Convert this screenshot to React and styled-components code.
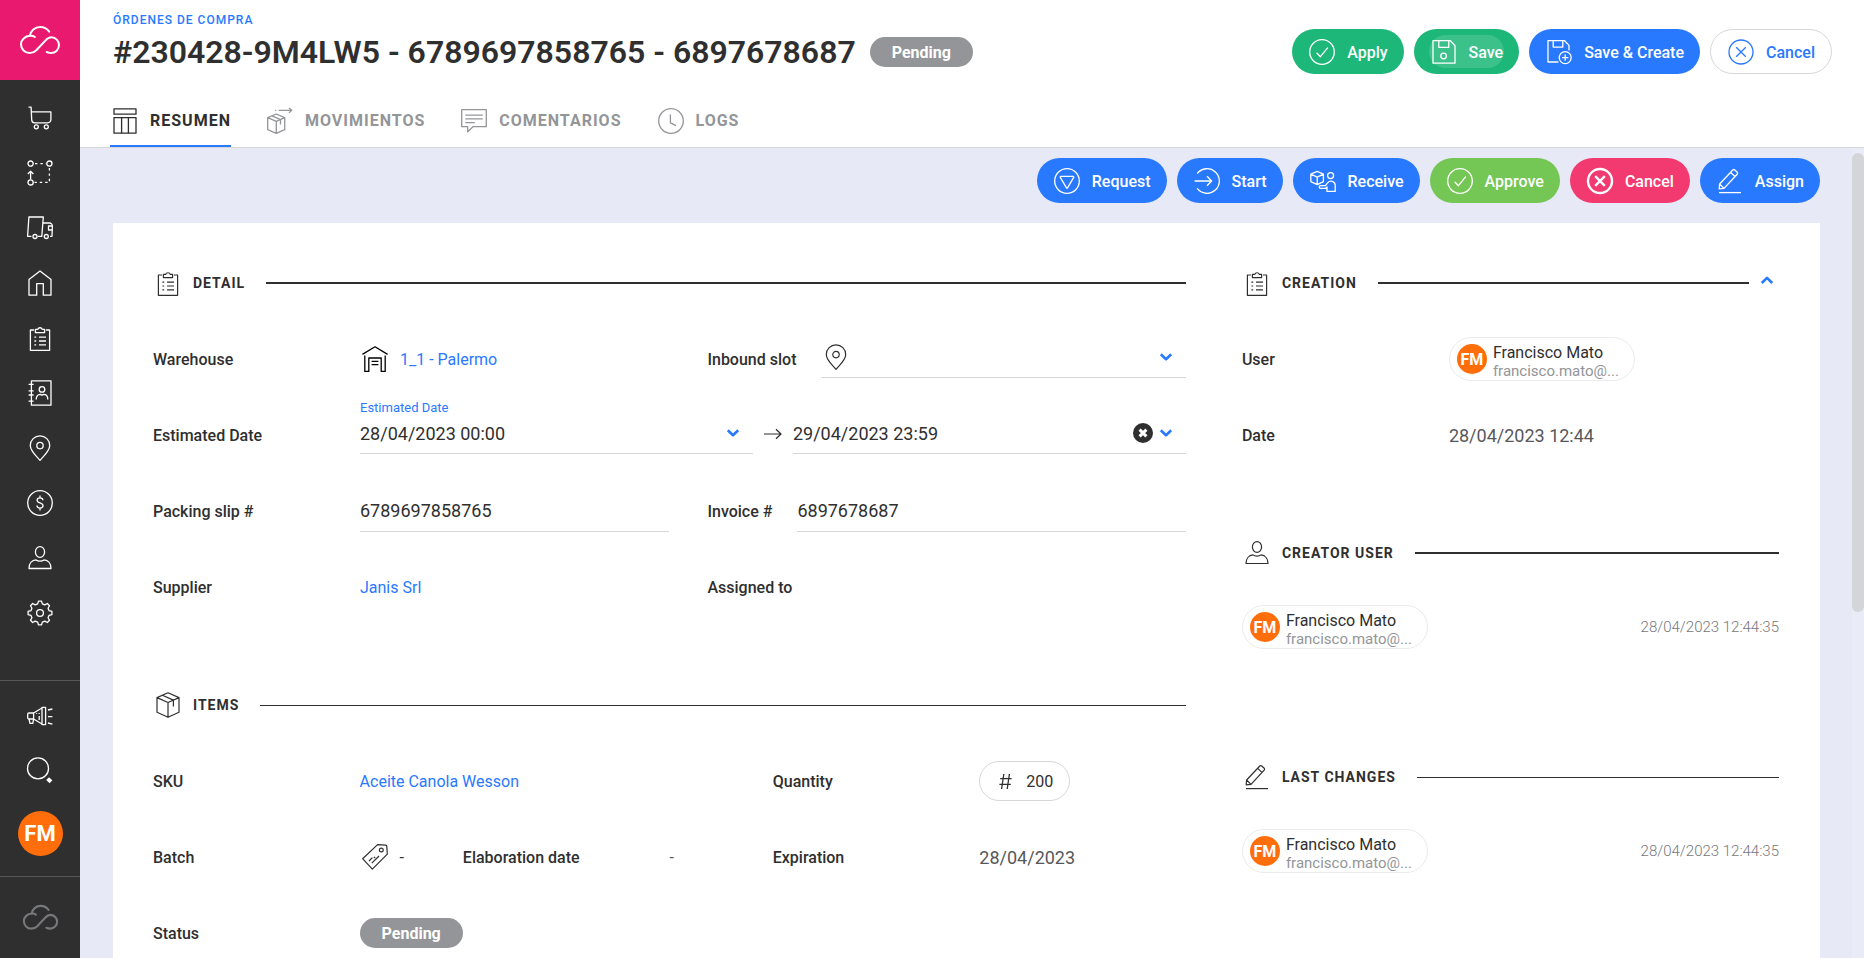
import { useState } from "react";
import styled, { createGlobalStyle, css } from "styled-components";

const colors = {
  black: "#2f2f2f",
  darkGrey: "#58585a",
  midGrey: "#77787b",
  grey: "#939598",
  lightGrey: "#d5d7db",
  blue: "#2979ff",
  green: "#1db779",
  lightGreen: "#74c655",
  red: "#f33a70",
  pink: "#e8196e",
  orange: "#ff6e0b",
  background: "#e7eaf6",
};

const GlobalStyle = createGlobalStyle`
  * {
    box-sizing: border-box;
  }
  body {
    margin: 0;
    font-family: Roboto, "Liberation Sans", sans-serif;
    font-size: 16px;
    color: ${colors.black};
  }
  button, input, select {
    font: inherit;
    color: inherit;
  }
`;

/** Icons */

const Svg = styled.svg`
  display: block;
  flex: none;
  overflow: visible;
  fill: none;
  stroke: currentColor;
  stroke-linejoin: round;
`;

const GEAR_PATH = (() => {
  const points = [];
  for (let i = 0; i < 8; i++) {
    const mid = (i * Math.PI) / 4;
    [[-0.25, 9.4], [-0.13, 12], [0.13, 12], [0.25, 9.4]].forEach(([offset, radius]) => {
      const x = 13 + radius * Math.sin(mid + offset);
      const y = 13 - radius * Math.cos(mid + offset);
      points.push(`${x.toFixed(2)} ${y.toFixed(2)}`);
    });
  }
  return `M${points.join("L")}Z`;
})();

const icons = {
  cart: (
    <>
      <path d="M1.5 2.2h2.6l.6 12.6a3 3 0 0 0 3 3h13a3.2 3.2 0 0 0 3.2-3.2V6.8H4.4" />
      <circle cx="9.3" cy="21.8" r="2" />
      <circle cx="19.3" cy="21.8" r="2" />
    </>
  ),
  route: (
    <>
      <circle cx="3.6" cy="3.6" r="2.6" />
      <circle cx="22.4" cy="3.6" r="2.6" />
      <circle cx="3.6" cy="22.4" r="2.6" />
      <path d="M8 3.6h11M22.4 8v14.4H7.5" strokeDasharray="2.4 3" />
      <path d="M3.6 19.6v-8M.8 14l2.8-2.8L6.4 14" />
    </>
  ),
  truck: (
    <>
      <path d="M4.4 21.3H.6L1.9 2h14.4l-1.5 19.3h-4M16 8h6.4a3 3 0 0 1 3 3l-.4 10.3h-2" />
      <path d="M25.3 11h-3.8v4h3.8" />
      <circle cx="8" cy="21.5" r="2" />
      <circle cx="19.3" cy="21.5" r="2" />
    </>
  ),
  home: <path d="M2 25.2V9.6L13 1l11 8.6v15.6h-7.7V13.6H9.7v11.6z" />,
  clipboard: (
    <>
      <path d="M7 5H3.4v20.3h19.2V5H19" />
      <path d="M8.4 7.6V4.4h2.4a2.3 2.3 0 0 1 4.4 0h2.4v3.2z" />
      <path d="M7.4 12.2h1.8M7.4 16h1.8M7.4 19.8h1.8M12 12.2h7M12 16h7M12 19.8h7" />
    </>
  ),
  contacts: (
    <>
      <path d="M4.4.8H24v24.4H4.4z" />
      <path d="M1.6 4.4h5M1.6 10.8h5M1.6 15h5M1.6 21.2h5" />
      <circle cx="15" cy="9.4" r="2.8" />
      <path d="M9.2 19.6c0-3 1.4-5.2 4-5.2 1 .7 2.6.7 3.6 0 2.6 0 4 2.2 4 5.2" />
    </>
  ),
  pin: (
    <>
      <path d="M13 25.4C9 20.5 3.3 16.2 3.3 10.5a9.7 9.7 0 0 1 19.4 0c0 5.7-5.7 10-9.7 14.9z" />
      <circle cx="13" cy="10.6" r="3.2" />
    </>
  ),
  dollar: (
    <>
      <circle cx="13" cy="13" r="12.3" />
      <path d="M15.9 10.2c0-1.5-1.2-2.4-2.9-2.4s-2.9.9-2.9 2.4c0 3.4 5.9 2 5.9 5.4 0 1.5-1.3 2.5-3 2.5s-3-1-3-2.5M13 5.4v2.4M13 18.1v2.5" />
    </>
  ),
  person: (
    <>
      <ellipse cx="13" cy="7" rx="4.6" ry="5.4" />
      <path d="M2 23.5c0-4.8 2.8-8.3 7-8.6 2 1.7 6 1.7 8 0 4.2.3 7 3.8 7 8.6z" />
    </>
  ),
  gear: (
    <>
      <path d={GEAR_PATH} />
      <circle cx="13" cy="13" r="3.4" />
    </>
  ),
  megaphone: (
    <>
      <path d="M6.6 10H2a1.3 1.3 0 0 0-1.3 1.3v3.4A1.3 1.3 0 0 0 2 16h4.6zM6.6 10L15 5M6.6 16l8.400 5" />
      <path d="M15 4.4h3.6v17.2H15zM2 16l1 4.400h2.800L6.600 16M12.200 10v1M12.200 13v4M9.600 10.200v.8" />
      <path d="M21 7l4.400-1M21 13.600h4.400M21 20l4.400 1.200" />
    </>
  ),
  search: (
    <>
      <circle cx="11" cy="11.4" r="10.5" />
      <path d="M20.6 21.6l3.4 3.2" strokeWidth="4" />
    </>
  ),
  table: (
    <>
      <path d="M2 .8h22v5.4H2zM2 9.6h22v15.6H2z" />
      <path d="M9.6 9.6v15.6M16.4 9.6v15.6" />
    </>
  ),
  boxArrow: (
    <>
      <path d="M9.3 6l8.4 3.7v12l-8.4 3.6-8.6-3.6v-12zM.7 9.7l8.6 3.7 8.4-3.7M9.3 13.4v11.9" />
      <path d="M5 7.9l8.5 3.7v5M8.1 2.3h1.2M11.6 2.3h13M22 0l2.7 2.3L22 4.9" />
    </>
  ),
  comment: (
    <>
      <path d="M.7 1.7h24.6v17H12l-5.3 5v-5h-6z" />
      <path d="M4.4 7.2h17.4M4.4 10.9h17.4M4.4 14.7h9.4" />
    </>
  ),
  clock: (
    <>
      <circle cx="13" cy="13" r="12.3" />
      <path d="M12.4 6.6v8.2l5.6 2.8" />
    </>
  ),
  check: (
    <>
      <circle cx="13" cy="13" r="12.3" />
      <path d="M7.6 13.7l3.8 4 7.4-9" />
    </>
  ),
  save: (
    <>
      <path d="M2 1.7h17.4L24 6.8v17.4H2zM7.8 1.7v6.6h10V1.7" />
      <circle cx="12.6" cy="17" r="2.8" />
    </>
  ),
  saveCreate: (
    <>
      <path d="M12.4 23H2V1.7h16.6L23 6.4v5M7.2 1.7v6.4h9.6V1.7" />
      <circle cx="19.2" cy="18.6" r="6" />
      <path d="M19.2 15.4v6.4M16 18.6h6.4" />
    </>
  ),
  cross: (
    <>
      <circle cx="13" cy="13" r="12" />
      <path d="M8.2 8.2l9.6 9.6M17.8 8.2l-9.6 9.6" />
    </>
  ),
  request: (
    <>
      <circle cx="13" cy="13" r="12.3" />
      <path d="M6.8 8.4h12.4a.6.6 0 0 1 .5.9l-6.200 10.600a.6.6 0 0 1-1 0L6.300 9.300a.6.6 0 0 1 .5-.9z" />
    </>
  ),
  start: (
    <>
      <path d="M3.2 5.6a12.3 12.3 0 1 1 0 14.8" />
      <path d="M.6 13h16.8M13 8.2l4.6 4.8-4.6 4.8" />
    </>
  ),
  receive: (
    <>
      <path d="M7.2 3.4l6.2 2.8v7.4l-6.2 3-6.4-3V6.2zM.8 6.2l6.4 3 6.2-3M7.2 9.2v7.4" />
      <circle cx="20.6" cy="7.6" r="3" />
      <path d="M17 23.4h8.2V17a4.2 4.2 0 0 0-7.4-2.4l-2.4 3h-4.8a1.4 1.4 0 0 0 0 2.8h4.8l1.6-1.4z" />
    </>
  ),
  pencil: (
    <>
      <path d="M2.2 20.8l.4-4.8L15.8 2a1.500 1.500 0 0 1 2 0l2.400 2.200a1.500 1.500 0 0 1 0 2L7 20.400zM13.600 4.400l4.400 4M2.600 16L7 20.400" />
      <path d="M2 24.6h22" />
    </>
  ),
  warehouse: (
    <>
      <path d="M.4 8.4L13 .8l12.6 7.6M2.8 9.4v16h4V12h12.4v13.4h4v-16" />
      <path d="M9.6 15.4h6.8M9.6 18.7h6.8" />
    </>
  ),
  box: (
    <>
      <path d="M13 .8l11 4.8v14.6l-11 5-11-5V5.600zM2 5.600l11 4.900 11-4.900M13 10.500v14.700" />
      <path d="M7.4 3.2l11 4.9v6.4" />
    </>
  ),
  tag: (
    <>
      <path d="M15.6.6l8 .6a1.3 1.3 0 0 1 1.2 1.2l.5 7.8-15 15L.6 14.7z" />
      <circle cx="19.3" cy="6" r="1.9" />
      <path d="M7 17l3.4-3.4M9.8 19.2l7.2-7.2M11.8 14.2l1.4-1.4" />
    </>
  ),
};

function Icon({ name, strokeWidth = 1.3 }) {
  return (
    <Svg viewBox="0 0 26 26" width="26" height="26" strokeWidth={strokeWidth} aria-hidden="true">
      {icons[name]}
    </Svg>
  );
}

function Logo({ width, strokeWidth = 2 }) {
  return (
    <Svg
      viewBox="0 0 40 28"
      width={width}
      strokeWidth={strokeWidth}
      strokeLinecap="round"
      aria-hidden="true"
    >
      <path d="M29.2 5.6C27 2.7 23.8 1 20.2 1 14.8 1 10.6 4.8 9.9 9.8" />
      <path d="M14.8 10.9C13.4 10 11.8 9.6 10 9.7 5 10 1 13.8 1 18.3 1 23.2 4.8 27 9.7 27c2.6 0 4.8-1 6.6-2.8l9-9.6c1.7-1.9 3.5-3.3 6-3.3 4.4 0 7.7 3.6 7.7 7.8 0 4.4-3.5 7.9-7.9 7.9-1.6 0-3-.4-4.4-1" />
    </Svg>
  );
}

function Chevron({ up }) {
  return (
    <Svg viewBox="0 0 12 8" width="12" height="8" strokeWidth="2.6" aria-hidden="true">
      <path d={up ? "M.8 7L6 1.8 11.2 7" : "M.8 1.2L6 6.2l5.2-5"} />
    </Svg>
  );
}

/** Page shell */

const Page = styled.div`
  display: flex;
  height: 100vh;
  overflow: hidden;
  background-color: ${colors.background};
`;

const Sidebar = styled.aside`
  width: 80px;
  flex: none;
  display: flex;
  flex-direction: column;
  background-color: ${colors.black};
  color: #fff;
`;

const LogoLink = styled.a`
  height: 80px;
  flex: none;
  display: flex;
  align-items: center;
  justify-content: center;
  color: #fff;
  background-color: ${colors.pink};
`;

const Nav = styled.nav`
  flex: 1;
  display: flex;
  flex-direction: column;
  align-items: center;
  gap: 29px;
  padding-top: 25px;
`;

const NavLink = styled.a`
  color: #fff;
`;

const SidebarTools = styled.div`
  display: flex;
  flex-direction: column;
  align-items: center;
  gap: 28px;
  padding: 22px 0 20px;
  border-top: 1px solid ${colors.darkGrey};
`;

const IconButton = styled.button`
  display: flex;
  align-items: center;
  padding: 0;
  border: 0;
  background: none;
  cursor: pointer;
  color: ${(props) => props.$color || "inherit"};
`;

const SidebarFooter = styled.div`
  height: 82px;
  display: flex;
  align-items: center;
  justify-content: center;
  border-top: 1px solid ${colors.darkGrey};
  color: ${colors.midGrey};
`;

const Avatar = styled.span`
  flex: none;
  width: ${(props) => props.$size}px;
  height: ${(props) => props.$size}px;
  border-radius: 50%;
  display: flex;
  align-items: center;
  justify-content: center;
  font-size: ${(props) => (props.$size > 40 ? 22 : 16)}px;
  font-weight: 700;
  color: #fff;
  background-color: ${colors.orange};
`;

const Main = styled.main`
  flex: 1;
  min-width: 0;
  display: flex;
  flex-direction: column;
`;

/** Header */

const Header = styled.header`
  flex: none;
  background-color: #fff;
  border-bottom: 1px solid ${colors.lightGrey};
`;

const HeaderTop = styled.div`
  display: flex;
  justify-content: space-between;
  align-items: flex-end;
  padding: 12px 32px 0 33px;
`;

const Breadcrumb = styled.a`
  display: block;
  font-size: 12px;
  line-height: 17px;
  font-weight: 500;
  letter-spacing: 1px;
  text-decoration: none;
  color: ${colors.blue};
`;

const TitleRow = styled.div`
  display: flex;
  align-items: center;
  gap: 14px;
  height: 45px;
`;

const Title = styled.h1`
  margin: 0;
  font-size: 32px;
  font-weight: 600;
`;

const Badge = styled.span`
  display: inline-block;
  padding: 2px 22px 0;
  border-radius: 15px;
  line-height: 28px;
  font-weight: 700;
  color: #fff;
  background-color: ${colors.grey};
`;

const Actions = styled.div`
  display: flex;
  gap: 10px;
`;

const ActionButton = styled.button`
  position: relative;
  display: flex;
  align-items: center;
  gap: 12px;
  height: 45px;
  padding: 1px 16px 0 17px;
  border: 0;
  border-radius: 23px;
  font-weight: 500;
  cursor: pointer;
  color: #fff;
  background-color: ${(props) => colors[props.$color] || colors.blue};

  ${(props) =>
    props.$outlined &&
    css`
      color: ${colors.blue};
      background-color: #fff;
      border: 1px solid ${colors.lightGrey};
    `}

  ${(props) =>
    props.$pressed &&
    css`
      &::after {
        content: "";
        position: absolute;
        inset: 6px 15px;
        border-radius: 17px;
        background-color: rgba(255, 255, 255, 0.14);
      }
    `}
`;

const Tabs = styled.nav`
  display: flex;
  gap: 34px;
  padding: 19px 30px 0;
`;

const Tab = styled.button`
  display: flex;
  align-items: center;
  gap: 12px;
  height: 54px;
  padding: 3px 0 0 2px;
  border: 0;
  border-bottom: 2px solid ${(props) => (props.$active ? colors.blue : "transparent")};
  background: none;
  font-weight: 700;
  letter-spacing: 1px;
  cursor: pointer;
  color: ${(props) => (props.$active ? colors.black : colors.grey)};
`;

/** Content */

const Body = styled.div`
  flex: 1;
  min-height: 0;
  display: flex;
`;

const Content = styled.div`
  flex: 1;
  min-width: 0;
  overflow-y: auto;
  scrollbar-width: none;
  padding: 10px 32px 0 33px;
`;

const ScrollTrack = styled.div`
  width: 12px;
  flex: none;
  padding-top: 5px;
  background-color: #e9ebf7;
`;

const ScrollThumb = styled.div`
  height: 57%;
  border-radius: 6px;
  background-color: #d4d5d8;
`;

const Toolbar = styled(Actions)`
  justify-content: flex-end;
  margin-bottom: 20px;
`;

const Card = styled.div`
  display: grid;
  grid-template-columns: 25fr 13fr;
  column-gap: 56px;
  min-height: 100%;
  padding: 45px 41px 45px 40px;
  background-color: #fff;
`;

const Section = styled.section`
  margin-bottom: 65px;
`;

const SectionHeader = styled.div`
  display: flex;
  align-items: center;
  height: 30px;
  padding-left: 2px;
  margin-bottom: 23px;
`;

const SectionTitle = styled.h2`
  margin: 0 21px 0 12px;
  font-size: 14px;
  font-weight: 700;
  letter-spacing: 1px;
`;

const Rule = styled.div`
  flex: 1;
  height: ${(props) => (props.$thin ? 1 : 2)}px;
  background-color: ${colors.black};
`;

const CollapseButton = styled(IconButton)`
  margin: 0 6px 6px 12px;
`;

const Row = styled.div`
  display: flex;
  align-items: center;
  height: 76px;
`;

const LeftHalf = styled.div`
  width: 50%;
  flex: none;
  display: flex;
  align-items: center;
  margin-right: 38px;
`;

const RightHalf = styled.div`
  flex: 1;
  min-width: 0;
  display: flex;
  align-items: center;
  gap: 25px;
`;

const ItemRow = styled.div`
  display: grid;
  grid-template-columns: repeat(10, 1fr);
  align-items: center;
  height: 76px;
`;

const Cell = styled.div`
  grid-column: span ${(props) => props.$span};
  display: flex;
  align-items: center;
  gap: 12px;
  color: ${(props) => (props.$muted ? colors.darkGrey : colors.black)};
  font-weight: ${(props) => (props.$label ? 500 : 400)};
`;

const Label = styled.label`
  flex: none;
  font-weight: 500;
  width: ${(props) => (props.$wide ? "207px" : "auto")};
`;

const Value = styled.span`
  font-size: 18px;
  color: ${colors.darkGrey};
`;

const ValueLink = styled.a`
  text-decoration: none;
  color: ${colors.blue};
`;

const IconValue = styled.div`
  display: flex;
  align-items: center;
  gap: 12px;
  padding-left: 2px;
  color: ${(props) => (props.$strong ? "#000" : colors.black)};
`;

const Field = styled.div`
  position: relative;
  flex: 1;
  min-width: 0;
  display: flex;
  align-items: center;
  gap: 7px;
  height: ${(props) => (props.$tall ? 42 : 38)}px;
  padding: ${(props) => (props.$tall ? "0" : "0 14px 3px 0")};
  border-bottom: 1px solid ${colors.lightGrey};
`;

const SlotField = styled(Field)`
  padding-left: 2px;
`;

const FloatingLabel = styled.label`
  position: absolute;
  top: -16px;
  left: 0;
  font-size: 13px;
  line-height: 16px;
  color: ${colors.blue};
`;

const Input = styled.input`
  flex: 1;
  min-width: 0;
  padding: 0;
  border: 0;
  outline: none;
  background: none;
  font-size: 18px;
`;

const SlotSelect = styled.select`
  flex: 1;
  min-width: 0;
  appearance: none;
  border: 0;
  outline: none;
  background: none;
`;

const ArrowSlot = styled.div`
  width: 40px;
  flex: none;
  display: flex;
  justify-content: center;
  padding-bottom: 3px;
`;

const QuantityPill = styled.span`
  display: flex;
  align-items: center;
  gap: 14px;
  height: 40px;
  padding: 0 16px 0 19px;
  border: 1px solid ${colors.lightGrey};
  border-radius: 20px;
`;

const Chip = styled.div`
  display: flex;
  align-items: center;
  gap: 6px;
  width: 186px;
  height: 44px;
  padding-left: 7px;
  border: 1px solid #ebebeb;
  border-radius: 22px;
`;

const ChipText = styled.div`
  padding-top: 4px;
  line-height: 19px;
`;

const ChipEmail = styled.div`
  font-size: 15px;
  line-height: 18px;
  color: ${colors.grey};
`;

const LogRow = styled.div`
  display: flex;
  align-items: center;
  justify-content: space-between;
  height: 72px;
  margin-bottom: 99px;
`;

const Timestamp = styled.time`
  font-size: 15px;
  font-weight: 300;
  color: ${colors.midGrey};
`;

const navItems = [
  ["cart", "Orders"],
  ["route", "Routes"],
  ["truck", "Delivery"],
  ["home", "Home"],
  ["clipboard", "Purchases"],
  ["contacts", "Contacts"],
  ["pin", "Locations"],
  ["dollar", "Pricing"],
  ["person", "Users"],
  ["gear", "Settings"],
];

const tabs = [
  ["table", "RESUMEN"],
  ["boxArrow", "MOVIMIENTOS"],
  ["comment", "COMENTARIOS"],
  ["clock", "LOGS"],
];

const orderActions = [
  { icon: "request", text: "Request" },
  { icon: "start", text: "Start" },
  { icon: "receive", text: "Receive" },
  { icon: "check", text: "Approve", color: "lightGreen" },
  { icon: "cross", text: "Cancel", color: "red", strokeWidth: 2.4 },
  { icon: "pencil", text: "Assign" },
];

function Action({ icon, text, color, strokeWidth, ...rest }) {
  return (
    <ActionButton type="button" $color={color} {...rest}>
      <Icon name={icon} strokeWidth={strokeWidth} />
      {text}
    </ActionButton>
  );
}

function Heading({ icon, title, thin, children }) {
  return (
    <SectionHeader>
      <Icon name={icon} strokeWidth={1.2} />
      <SectionTitle>{title}</SectionTitle>
      <Rule $thin={thin} />
      {children}
    </SectionHeader>
  );
}

function UserChip() {
  return (
    <Chip>
      <Avatar $size={30}>FM</Avatar>
      <ChipText>
        <div>Francisco Mato</div>
        <ChipEmail>francisco.mato@...</ChipEmail>
      </ChipText>
    </Chip>
  );
}

function DetailSection() {
  const [from, setFrom] = useState("28/04/2023 00:00");
  const [to, setTo] = useState("29/04/2023 23:59");

  return (
    <Section>
      <Heading icon="clipboard" title="DETAIL" />
      <Row>
        <LeftHalf>
          <Label as="span" $wide>Warehouse</Label>
          <IconValue $strong>
            <Icon name="warehouse" />
            <ValueLink href="#warehouse">1_1 - Palermo</ValueLink>
          </IconValue>
        </LeftHalf>
        <RightHalf>
          <Label htmlFor="slot">Inbound slot</Label>
          <SlotField>
            <Icon name="pin" strokeWidth={1.2} />
            <SlotSelect id="slot">
              <option value=""></option>
            </SlotSelect>
            <IconButton as="span" $color={colors.blue}>
              <Chevron />
            </IconButton>
          </SlotField>
        </RightHalf>
      </Row>
      <Row>
        <Label htmlFor="date-to" $wide>Estimated Date</Label>
        <Field>
          <FloatingLabel htmlFor="date-from">Estimated Date</FloatingLabel>
          <Input id="date-from" value={from} onChange={(e) => setFrom(e.target.value)} />
          <IconButton type="button" aria-label="Open start calendar" $color={colors.blue}>
            <Chevron />
          </IconButton>
        </Field>
        <ArrowSlot>
          <Svg viewBox="0 0 18 12" width="18" height="12" strokeWidth="1.2" aria-hidden="true">
            <path d="M0 6h17M12 1.2L17 6l-5 4.8" />
          </Svg>
        </ArrowSlot>
        <Field>
          <Input id="date-to" value={to} onChange={(e) => setTo(e.target.value)} />
          <IconButton type="button" aria-label="Clear date" onClick={() => setTo("")}>
            <Svg viewBox="0 0 20 20" width="20" height="20" strokeWidth="3" aria-hidden="true">
              <circle cx="10" cy="10" r="10" fill={colors.black} stroke="none" />
              <path d="M6.6 6.6l6.8 6.8M13.4 6.6l-6.8 6.8" stroke="#fff" />
            </Svg>
          </IconButton>
          <IconButton type="button" aria-label="Open end calendar" $color={colors.blue}>
            <Chevron />
          </IconButton>
        </Field>
      </Row>
      <Row>
        <LeftHalf>
          <Label htmlFor="packing" $wide>Packing slip #</Label>
          <Field $tall>
            <Input id="packing" defaultValue="6789697858765" />
          </Field>
        </LeftHalf>
        <RightHalf>
          <Label htmlFor="invoice">Invoice #</Label>
          <Field $tall>
            <Input id="invoice" defaultValue="6897678687" />
          </Field>
        </RightHalf>
      </Row>
      <Row>
        <LeftHalf>
          <Label as="span" $wide>Supplier</Label>
          <ValueLink href="#supplier">Janis Srl</ValueLink>
        </LeftHalf>
        <RightHalf>
          <Label as="span">Assigned to</Label>
        </RightHalf>
      </Row>
    </Section>
  );
}

function ItemsSection() {
  return (
    <Section>
      <Heading icon="box" title="ITEMS" thin />
      <ItemRow>
        <Cell $span={2} $label>SKU</Cell>
        <Cell $span={4}>
          <ValueLink href="#sku">Aceite Canola Wesson</ValueLink>
        </Cell>
        <Cell $span={2} $label>Quantity</Cell>
        <Cell $span={2}>
          <QuantityPill>
            <Svg viewBox="0 0 13 17" width="13" height="17" strokeWidth="1.3" aria-hidden="true">
              <path d="M4.8 1L2.6 16M10.4 1L8.2 16M1.2 5.6h11.4M.4 11.4h11.4" />
            </Svg>
            200
          </QuantityPill>
        </Cell>
      </ItemRow>
      <ItemRow>
        <Cell $span={2} $label>Batch</Cell>
        <Cell $span={1} $muted>
          <IconValue>
            <Icon name="tag" strokeWidth={1.2} />-
          </IconValue>
        </Cell>
        <Cell $span={2} $label>Elaboration date</Cell>
        <Cell $span={1} $muted>-</Cell>
        <Cell $span={2} $label>Expiration</Cell>
        <Cell $span={2}>
          <Value>28/04/2023</Value>
        </Cell>
      </ItemRow>
      <ItemRow>
        <Cell $span={2} $label>Status</Cell>
        <Cell $span={4}>
          <Badge>Pending</Badge>
        </Cell>
      </ItemRow>
    </Section>
  );
}

function SideColumn() {
  return (
    <div>
      <Section>
        <Heading icon="clipboard" title="CREATION">
          <CollapseButton type="button" aria-label="Collapse" $color={colors.blue}>
            <Chevron up />
          </CollapseButton>
        </Heading>
        <Row>
          <Label as="span" $wide>User</Label>
          <UserChip />
        </Row>
        <Row>
          <Label as="span" $wide>Date</Label>
          <Value>28/04/2023 12:44</Value>
        </Row>
      </Section>
      <Heading icon="person" title="CREATOR USER" />
      <LogRow>
        <UserChip />
        <Timestamp>28/04/2023 12:44:35</Timestamp>
      </LogRow>
      <Heading icon="pencil" title="LAST CHANGES" thin />
      <LogRow>
        <UserChip />
        <Timestamp>28/04/2023 12:44:35</Timestamp>
      </LogRow>
    </div>
  );
}

function App() {
  const [activeTab, setActiveTab] = useState("RESUMEN");

  return (
    <Page>
      <GlobalStyle />
      <Sidebar>
        <LogoLink href="#" aria-label="Start page">
          <Logo width={40} />
        </LogoLink>
        <Nav>
          {navItems.map(([icon, label]) => (
            <NavLink key={icon} href={`#${icon}`} aria-label={label}>
              <Icon name={icon} />
            </NavLink>
          ))}
        </Nav>
        <SidebarTools>
          <IconButton type="button" aria-label="News">
            <Icon name="megaphone" />
          </IconButton>
          <IconButton type="button" aria-label="Search">
            <Icon name="search" />
          </IconButton>
          <Avatar $size={45}>FM</Avatar>
        </SidebarTools>
        <SidebarFooter>
          <Logo width={35} strokeWidth={2.4} />
        </SidebarFooter>
      </Sidebar>

      <Main>
        <Header>
          <HeaderTop>
            <div>
              <Breadcrumb href="#orders">ÓRDENES DE COMPRA</Breadcrumb>
              <TitleRow>
                <Title>#230428-9M4LW5 - 6789697858765 - 6897678687</Title>
                <Badge>Pending</Badge>
              </TitleRow>
            </div>
            <Actions>
              <Action icon="check" text="Apply" color="green" />
              <Action icon="save" text="Save" color="green" $pressed />
              <Action icon="saveCreate" text="Save & Create" />
              <Action icon="cross" text="Cancel" $outlined />
            </Actions>
          </HeaderTop>
          <Tabs>
            {tabs.map(([icon, label]) => (
              <Tab
                key={label}
                type="button"
                $active={label === activeTab}
                onClick={() => setActiveTab(label)}
              >
                <Icon name={icon} />
                {label}
              </Tab>
            ))}
          </Tabs>
        </Header>

        <Body>
          <Content>
            <Toolbar>
              {orderActions.map((action) => (
                <Action key={action.text} {...action} />
              ))}
            </Toolbar>
            <Card>
              <div>
                <DetailSection />
                <ItemsSection />
              </div>
              <SideColumn />
            </Card>
          </Content>
          <ScrollTrack>
            <ScrollThumb />
          </ScrollTrack>
        </Body>
      </Main>
    </Page>
  );
}

export default App;
